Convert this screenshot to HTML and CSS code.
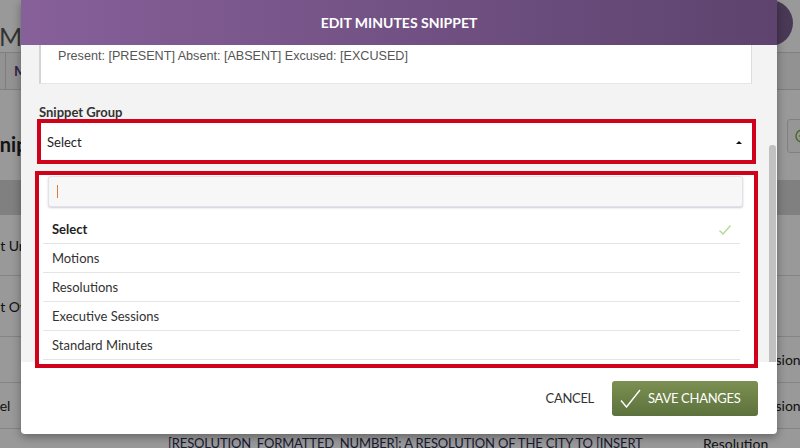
FILE: index.html
```html
<!DOCTYPE html>
<html lang="en">
<head>
<meta charset="utf-8">
<title>Edit Minutes Snippet</title>
<link rel="stylesheet" href="styles.css">
</head>
<body>
<div class="page">
  <div class="topbar">
    <span class="page-title">Manage Snippets</span>
    <span class="pill"></span>
  </div>
  <div class="tabs">
    <div class="tab tab-first"></div>
    <div class="tab tab-active">Minutes</div>
  </div>
  <div class="title-row">
    <span class="section-title">Snippets</span>
    <span class="add-btn"><svg width="14" height="14" viewBox="0 0 14 14"><circle cx="7" cy="7" r="6" fill="none" stroke="#7fb04a" stroke-width="1.5"/><path d="M7 4v6M4 7h6" stroke="#7fb04a" stroke-width="1.5"/></svg></span>
  </div>
  <div class="thead"></div>
  <div class="row row-tall"><span class="c1">Consent Unanimous</span><span class="c2"></span><span class="c3"></span></div>
  <div class="row row-tall"><span class="c1">Consent Overview</span><span class="c2"></span><span class="c3"></span></div>
  <div class="row row-mid"><span class="c1"></span><span class="c2"></span><span class="c3 c3-shift">Closed Session</span></div>
  <div class="row row-mid"><span class="c1 c1-short">Cancel</span><span class="c2"></span><span class="c3 c3-shift">Closed Session</span></div>
  <div class="row row-last"><span class="c1"></span><span class="c2 res-text">[RESOLUTION_FORMATTED_NUMBER]: A RESOLUTION OF THE CITY TO [INSERT</span><span class="c3">Resolution</span></div>
</div>
<div class="overlay"></div>

<div class="modal">
  <div class="modal-header">EDIT MINUTES SNIPPET</div>
  <div class="modal-body">
    <div class="body-content">
      <div class="textarea">Present: [PRESENT] Absent: [ABSENT] Excused: [EXCUSED]</div>
      <div class="field-label">Snippet Group</div>
      <div class="select">
        <span>Select</span>
        <span class="caret"></span>
      </div>
    </div>
    <div class="scroll-track"><div class="scroll-thumb"></div></div>
  </div>
  <div class="modal-footer">
    <span class="cancel">CANCEL</span>
    <span class="save-btn">
      <svg class="save-icon" width="21" height="19" viewBox="0 0 21 19"><path d="M1 11.5 L6.5 18 L20 1" fill="none" stroke="#fff" stroke-width="1.4"/></svg>
      <span>SAVE CHANGES</span>
    </span>
  </div>

  <div class="dropdown">
    <div class="search"><span class="cursor"></span></div>
    <ul class="options">
      <li class="option selected"><span>Select</span><svg class="check" width="12" height="10" viewBox="0 0 12 10"><path d="M0.5 5.5 L4 9 L11.5 0.5" fill="none" stroke="#b2d98c" stroke-width="1.3"/></svg></li>
      <li class="option">Motions</li>
      <li class="option">Resolutions</li>
      <li class="option">Executive Sessions</li>
      <li class="option">Standard Minutes</li>
    </ul>
  </div>
</div>
</body>
</html>
```

FILE: styles.css
```css
* { box-sizing: border-box; }
html, body {
  margin: 0;
  padding: 0;
  width: 800px;
  height: 448px;
  overflow: hidden;
  font-family: Lato, "Open Sans", Arial, sans-serif;
  background: #fff;
}

/* ---------- background page ---------- */
.page {
  width: 800px;
  height: 448px;
  position: relative;
  overflow: hidden;
  color: #333;
}
.topbar {
  height: 53px;
  display: flex;
  justify-content: space-between;
  align-items: flex-start;
  border-bottom: 1px solid #d8d8d8;
}
.page-title {
  font-size: 25px;
  font-weight: 400;
  color: #555;
  margin-top: 21px;
  margin-left: -1px;
  line-height: 30px;
}
.pill {
  width: 70px;
  height: 46px;
  margin-right: 7px;
  background: #7c6090;
  border-radius: 0 23px 23px 0;
}
.tabs {
  height: 37px;
  display: flex;
  border-bottom: 1px solid #d5d5d5;
  background: #f4f4f4;
}
.tab-first {
  width: 6px;
  border-right: 1px solid #d0d0d0;
}
.tab-active {
  padding-left: 8px;
  font-size: 14px;
  line-height: 36px;
  color: #5a3a7a;
  font-weight: 700;
}
.title-row {
  height: 90px;
  display: flex;
  justify-content: space-between;
  align-items: center;
}
.section-title {
  font-size: 20px;
  font-weight: 700;
  color: #222;
  margin-left: -11px;
  margin-top: 18px;
}
.add-btn {
  width: 40px;
  height: 34px;
  margin-right: -27px;
  margin-top: 2px;
  border: 1px solid #d6d6d6;
  border-radius: 3px;
  background: #fafafa;
  display: flex;
  align-items: center;
  padding-left: 7px;
}
.thead {
  height: 35px;
  background: #d6d6d6;
}
.row {
  display: grid;
  grid-template-columns: 168px 535px 1fr;
  border-bottom: 1px solid #dcdcdc;
  font-size: 14px;
  color: #222;
  align-items: center;
}
.row-tall { height: 61px; }
.row-mid { height: 46px; }
.row-last { height: 40px; align-items: start; padding-top: 6px; border-bottom: none; }
.c1 { white-space: nowrap; margin-left: -46px; }
.c1.c1-short { margin-left: -31px; }
.c3 { white-space: nowrap; }
.c3.c3-shift { padding-left: 6px; }
.res-text {
  font-size: 13px;
  color: #2c2f55;
  white-space: nowrap;
  letter-spacing: -0.15px;
}

.overlay {
  position: absolute;
  inset: 0;
  background: rgba(0, 0, 0, 0.4);
}

/* ---------- modal ---------- */
.modal {
  position: absolute;
  left: 21px;
  top: 0;
  width: 756px;
  height: 434px;
  background: #fff;
  border-radius: 0 0 4px 4px;
  box-shadow: 0 3px 10px rgba(0, 0, 0, 0.35);
  display: flex;
  flex-direction: column;
  overflow: hidden;
}
.modal-header {
  height: 45px;
  flex: none;
  background: linear-gradient(to right, #87609a, #5d436e);
  color: #fff;
  font-weight: 700;
  font-size: 14px;
  display: flex;
  align-items: center;
  justify-content: center;
}
.modal-body {
  height: 317px;
  flex: none;
  display: flex;
  background: #f3f3f3;
}
.body-content {
  flex: 1;
  padding: 0 17px 0 18px;
}
.textarea {
  height: 39px;
  background: #fff;
  border-left: 2px solid #d4d4d4;
  border-right: 1px solid #dcdcdc;
  border-bottom: 1px solid #e6e6e6;
  padding: 3px 0 0 17px;
  font-family: "Liberation Sans", Arial, sans-serif;
  font-size: 12.6px;
  line-height: 16px;
  color: #555;
}
.field-label {
  margin-top: 20px;
  font-size: 13px;
  font-weight: 700;
  line-height: 16px;
  color: #333;
}
.select {
  margin-top: 1px;
  margin-right: -2px;
  height: 41px;
  background: #fff;
  border: 1px solid #ddd;
  outline: 4px solid #d0021b;
  outline-offset: -2px;
  display: flex;
  align-items: center;
  justify-content: space-between;
  padding: 0 11px 0 7px;
  font-size: 13px;
  color: #222;
}
.caret {
  width: 0;
  height: 0;
  border-left: 3px solid transparent;
  border-right: 3px solid transparent;
  border-bottom: 3px solid #111;
  margin-top: 1px;
}
.scroll-track {
  width: 8px;
  flex: none;
  padding-top: 100px;
  padding-right: 1px;
}
.scroll-thumb {
  height: 100%;
  background: #c1c1c1;
  border-radius: 3px 3px 0 0;
}

.modal-footer {
  flex: 1;
  display: flex;
  justify-content: flex-end;
  align-items: center;
  gap: 18px;
  padding-right: 19px;
}
.cancel {
  font-size: 13px;
  color: #333;
  letter-spacing: -0.3px;
}
.save-btn {
  width: 146px;
  height: 35px;
  border-radius: 3px;
  background: linear-gradient(to bottom, #7b9050, #5d713e);
  color: #fff;
  font-size: 13px;
  letter-spacing: -0.3px;
  display: flex;
  align-items: center;
  gap: 7px;
  padding-left: 8px;
}
.save-icon { flex: none; }

/* ---------- dropdown ---------- */
.dropdown {
  position: absolute;
  left: 14px;
  top: 171px;
  width: 723px;
  height: 197px;
  border: 4px solid #d0021b;
  background: #fff;
}
.search {
  height: 31px;
  margin: 1px 11px 0 9px;
  background: #f7f7f7;
  border: 1px solid #e3e3e3;
  border-radius: 3px;
  box-shadow: 0 1px 2px rgba(110, 70, 150, 0.3);
  display: flex;
  align-items: center;
  padding-left: 8px;
}
.cursor {
  width: 1px;
  height: 13px;
  background: #e07a3a;
}
.options {
  list-style: none;
  margin: 8px 14px 0 4px;
  padding: 0;
}
.option {
  height: 29px;
  border-bottom: 1px solid #e4e4e4;
  padding: 0 9px;
  display: flex;
  align-items: center;
  justify-content: space-between;
  font-size: 13px;
  color: #333;
}
.option.selected {
  font-weight: 700;
  color: #222;
}
.check { margin-top: 1px; }
```
